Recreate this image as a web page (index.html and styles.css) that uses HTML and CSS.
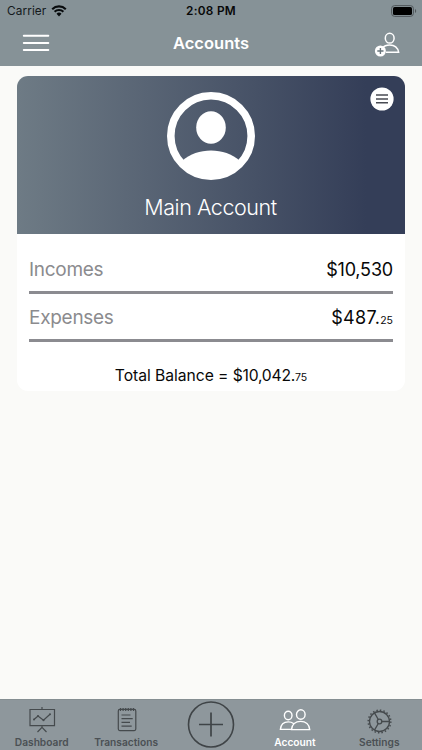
FILE: index.html
```html
<!DOCTYPE html>
<html lang="en">
<head>
<meta charset="utf-8">
<meta name="viewport" content="width=device-width, initial-scale=1">
<title>Accounts</title>
<link rel="stylesheet" href="styles.css">
</head>
<body>
<div class="app">
  <header class="top">
    <div class="status">
      <div class="carrier"><span>Carrier</span>
        <svg width="16" height="12" viewBox="0 0 16 12"><path d="M1.2 4.2a9.7 9.7 0 0 1 13.6 0M3.6 6.8a6.3 6.3 0 0 1 8.8 0" fill="none" stroke="#080b0d" stroke-width="2.1"/><path d="M5.5 8.8a3.6 3.6 0 0 1 5 0L8 11.4z" fill="#080b0d"/></svg>
      </div>
      <time class="clock">2:08 PM</time>
      <svg class="battery" width="26" height="12" viewBox="0 0 26 12"><rect x=".6" y=".6" width="21.8" height="10.8" rx="3" fill="none" stroke="#50575b"/><rect x="2" y="2" width="19" height="8" rx="1.6" fill="#000"/><path d="M24 4v4c1.6-.6 1.6-3.400 0-4z" fill="#50575b"/></svg>
    </div>
    <nav class="navbar">
      <svg class="menu" width="28" height="18" viewBox="0 0 28 18"><path d="M1.800 1.700h24.500M1.800 8.900h24.500M1.800 16h24.500" stroke="#fff" stroke-width="2" stroke-linecap="round"/></svg>
      <h1>Accounts</h1>
      <svg class="add-user" width="28" height="26" viewBox="0 0 28 26"><g fill="none" stroke="#fff" stroke-width="1.500"><ellipse cx="15.700" cy="7.200" rx="4.400" ry="4.900"/><path d="M8.500 16.800c1.600-2 4.100-2.900 7.200-2.900 5.200 0 8.100 2.800 8.900 7.300H12"/></g><circle cx="6.400" cy="20" r="5.500" fill="#fff"/><path d="M3.300 20h6.200M6.400 16.900v6.200" stroke="#68757b" stroke-width="1.400"/></svg>
    </nav>
  </header>
  <main>
    <article class="card">
      <div class="hero">
        <svg class="avatar" width="88" height="88" viewBox="0 0 88 88"><circle cx="44" cy="44" r="40.200" fill="none" stroke="#fff" stroke-width="7.600"/><ellipse cx="44" cy="35.500" rx="14.800" ry="16.200" fill="#fff"/><path d="M15.500 68.500C23 62 33 58.500 44 58.500S65 62 72.500 68.500C65 79 55 84 44 84S23 79 15.500 68.500z" fill="#fff"/></svg>
        <h2>Main Account</h2>
        <svg class="options" width="24" height="24" viewBox="0 0 24 24"><circle cx="12" cy="12" r="11.600" fill="#fff"/><path d="M6 8h12M6 12h12M6 15.800h12" stroke="#484b53" stroke-width="1.400"/></svg>
      </div>
      <div class="details">
        <div class="row"><span class="label">Incomes</span><span class="amount income">$10,530</span></div>
        <div class="row"><span class="label expense-label">Expenses</span><span class="amount expense">$487.<small>25</small></span></div>
        <p class="total"><span class="total-label">Total Balance = </span><span class="total-value">$10,042.</span><small>75</small></p>
      </div>
    </article>
  </main>
  <nav class="tabs">
    <div class="tab"><svg width="30" height="28" viewBox="0 0 30 28" fill="none" stroke="#454a4d" stroke-width="1.200"><path d="M3 3.500h24.500v16.200H3zM15 1v2.500M15 19.700v2M10.500 26l4.500-4.600 4.500 4.600M7 13.500l4-3.500 5.500 4.300 6.500-6"/><g fill="#454a4d" stroke="none"><circle cx="7" cy="13.500" r="1"/><circle cx="11" cy="10" r="1"/><circle cx="16.500" cy="14.300" r="1"/><circle cx="23" cy="8.300" r="1"/></g></svg><span class="t-dashboard">Dashboard</span></div>
    <div class="tab"><svg width="30" height="28" viewBox="0 0 30 28" fill="none" stroke="#454a4d" stroke-width="1.200"><rect x="6.300" y="3.400" width="17.500" height="21.200" rx="1.500"/><path d="M8.500 2v3M11.100 2v3M13.700 2v3M16.300 2v3M18.900 2v3M21.500 2v3M9.500 9h9M9.500 12.700h11.200M9.500 16.400h8.500M9.500 20.200h10.200"/></svg><span class="t-transactions">Transactions</span></div>
    <div class="tab tab-add"><svg width="48" height="48" viewBox="0 0 48 48" fill="none" stroke="#3f4447"><circle cx="24" cy="23.500" r="22.500" stroke-width="1.600"/><path d="M12 23.500h24M24 11.500v24" stroke-width="1.700"/></svg></div>
    <div class="tab active"><svg width="34" height="28" viewBox="0 0 34 28" fill="none" stroke="#fff" stroke-width="1.400"><ellipse cx="10.200" cy="9.500" rx="3.800" ry="4.200"/><ellipse cx="22.800" cy="8.500" rx="4.300" ry="4.700"/><path d="M13 23.400H2.400c.4-4.800 3.600-7.500 7.900-7.500 2.100 0 3.900.6 5.200 1.600M13.500 23.600h18.200c-.4-5-4-8.200-9.100-8.200s-8.700 3.200-9.100 8.200z"/></svg><span class="t-account">Account</span></div>
    <div class="tab"><svg width="28" height="28" viewBox="0 0 28 28" fill="none" stroke="#454a4d" stroke-width="1.300"><circle cx="13.500" cy="15.500" r="10"/><circle cx="13.500" cy="15.500" r="11.300" stroke-width="1.500" stroke-dasharray="1.500 2.050"/><circle cx="13.500" cy="15.500" r="2.300"/><path d="M15.800 15.500h7.700M12.300 13.500L8.500 6.900M12.300 17.500l-3.800 6.600"/></svg><span class="t-settings">Settings</span></div>
  </nav>
</div>
</body>
</html>
```
FILE: styles.css
```css
* { box-sizing: border-box; }
body { margin: 0; font-family: Inter, "Liberation Sans", sans-serif; background: #fafaf8; color: #080808; }
svg { display: block; flex: none; }
h1, h2, p { margin: 0; }
.app { height: 750px; display: flex; flex-direction: column; overflow: hidden; }
.top { height: 66px; flex: none; background: #869297; }
.status { height: 22px; padding: 0 5px 0 7px; display: grid; grid-template-columns: 1fr auto 1fr; align-items: center; }
.carrier { display: flex; align-items: center; gap: 5px; font-size: 11.8px; letter-spacing: .1px; color: #14191c; }
.clock { font-size: 11.8px; font-weight: 600; line-height: 22px; letter-spacing: .3px; margin-right: 2px; }
.battery { justify-self: end; margin-top: -1px; }
.navbar { height: 44px; padding: 0 20px 0 22px; display: grid; grid-template-columns: 1fr auto 1fr; align-items: center; }
.navbar h1 { font-size: 16.500px; line-height: 22px; font-weight: 600; color: #fff; margin-top: -3px; margin-right: 2px; }
.menu { margin-top: -2px; }
.add-user { justify-self: end; }
main { flex: 1; padding: 10px 17px 0; }
.card { height: 315px; border-radius: 11px; background: #fff; overflow: hidden; }
.hero { height: 158px; position: relative; padding-top: 16px; display: flex; flex-direction: column; align-items: center; background: linear-gradient(90deg, #6e7b85 0%, #343e58 90%); }
.hero h2 { margin-top: 13px; margin-right: 1px; font-size: 21.500px; line-height: 28px; font-weight: 350; letter-spacing: -.45px; color: #fff; white-space: nowrap; }
.options { position: absolute; right: 11px; top: 11px; }
.details { padding: 12px 12px 0; }
.row { height: 48px; padding-top: 2px; display: flex; align-items: center; justify-content: space-between; border-bottom: 3px solid #8b8b90; }
.label { font-size: 19px; letter-spacing: -.28px; color: #8b8b8e; }
.amount { font-size: 18px; letter-spacing: -.18px; }
.expense { letter-spacing: .3px; }
.amount small, .total small { font-size: 10.500px; letter-spacing: 0; }
.total { margin-top: 24px; text-align: center; font-size: 15.700px; line-height: 20px; letter-spacing: -.15px; white-space: nowrap; }
.total-label { letter-spacing: -.05px; }
.total-value { letter-spacing: -.25px; }
.tabs { height: 51px; flex: none; display: grid; grid-template-columns: repeat(5, 1fr); background: #8e979c; border-top: 1px solid #858e92; color: #4b5054; }
.tab { display: flex; flex-direction: column; align-items: center; padding-top: 6px; font-size: 10.200px; line-height: 14px; font-weight: 600; }
.tab span { margin-top: 1px; margin-right: 1px; white-space: nowrap; }
.tab-add { padding-top: 1px; }
.active { color: #fff; }
```
